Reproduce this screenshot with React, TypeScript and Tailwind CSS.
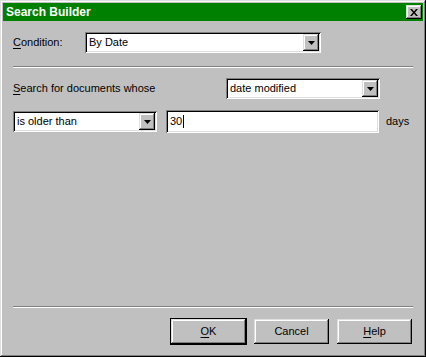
import { ReactNode } from "react";

const raised =
  "shadow-[inset_-1px_-1px_#000,inset_1px_1px_#dfdfdf,inset_-2px_-2px_#808080,inset_2px_2px_#fff]";
const sunken =
  "shadow-[inset_1px_1px_#808080,inset_-1px_-1px_#fff,inset_2px_2px_#000,inset_-2px_-2px_#dfdfdf]";

const Key = ({ children }: { children: ReactNode }) => <span className="underline underline-offset-2">{children}</span>;

const DropButton = () => (
  <div className={`flex h-[17px] w-[16px] items-center justify-center bg-[#c0c0c0] ${raised}`}>
    <svg width="7" height="4" viewBox="0 0 7 4">
      <path d="M0 0h7L3.5 4z" fill="#000" />
    </svg>
  </div>
);

const Combo = ({ value, width }: { value: string; width: string }) => (
  <div className={`flex h-[21px] items-center bg-white p-[2px] ${sunken} ${width}`}>
    <span className="flex-1 pl-[2px] leading-none">{value}</span>
    <DropButton />
  </div>
);

const Separator = () => (
  <div className="h-[2px] border-t border-b border-t-[#808080] border-b-white" />
);

const Button = ({ children, isDefault }: { children: ReactNode; isDefault?: boolean }) => (
  <div className={isDefault ? "border border-black" : "p-[1px]"}>
    <div className={`flex h-[25px] w-[75px] items-center justify-center bg-[#c0c0c0] ${raised}`}>
      {children}
    </div>
  </div>
);

export default function App() {
  return (
    <div
      className={`flex h-[357px] w-[426px] flex-col bg-[#c0c0c0] p-[3px] text-[11px] text-black ${raised}`}
      style={{ fontFamily: '"Liberation Sans", Arial, sans-serif' }}
    >
      <div className="flex h-[18px] items-center justify-between bg-[#008000] pl-[3px] pr-[1px]">
        <span className="text-[12px] font-bold text-white">Search Builder</span>
        <div className={`flex h-[14px] w-[16px] items-center justify-center bg-[#c0c0c0] ${raised}`}>
          <svg width="8" height="7" viewBox="0 0 8 7">
            <path d="M0 0h2l2 2.5L6 0h2L5 3.5 8 7H6L4 4.5 2 7H0l3-3.5z" fill="#000" />
          </svg>
        </div>
      </div>

      <div className="flex flex-1 flex-col px-[10px] pt-[11px]">
        <div className="flex items-center">
          <span className="w-[72px]">
            <Key>C</Key>ondition:
          </span>
          <Combo value="By Date" width="w-[236px]" />
        </div>

        <div className="mt-[13px] w-[400px]">
          <Separator />
        </div>

        <div className="mt-[10px] flex items-center">
          <span className="w-[213px]">
            <Key>S</Key>earch for documents whose
          </span>
          <Combo value="date modified" width="w-[154px]" />
        </div>

        <div className="mt-[11px] flex items-center">
          <Combo value="is older than" width="w-[144px]" />
          <div className={`ml-[9px] flex h-[23px] w-[213px] items-center bg-white px-[4px] ${sunken}`}>
            <span className="leading-none">30</span>
            <span className="ml-[1px] h-[13px] w-px bg-black" />
          </div>
          <span className="ml-[7px]">days</span>
        </div>

        <div className="mt-auto w-[400px]">
          <Separator />
        </div>

        <div className="mb-[9px] mt-[10px] flex w-[400px] justify-end gap-[6px]">
          <Button isDefault>
            <Key>O</Key>K
          </Button>
          <Button>Cancel</Button>
          <Button>
            <Key>H</Key>elp
          </Button>
        </div>
      </div>
    </div>
  );
}
